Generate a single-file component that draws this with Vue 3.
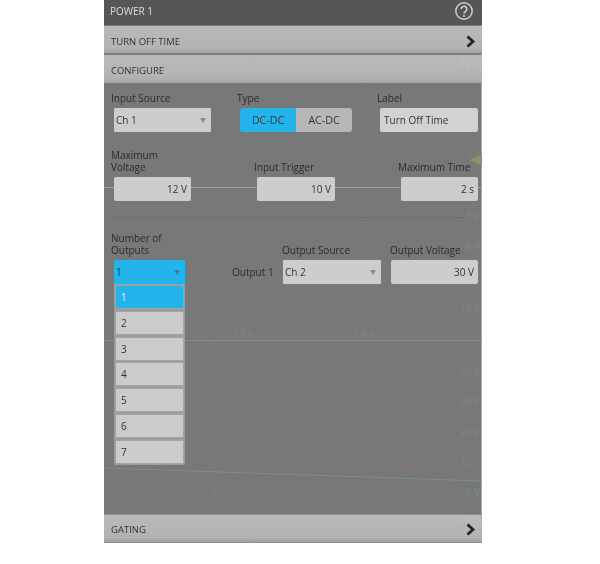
<script setup>
const menu = ['1', '2', '3', '4', '5', '6', '7']
const voltLabels = [
  ['12 V', 67, '#c2c2be'], ['9 V', 97, '#80807a'], ['3 V', 158, '#80807a'], ['-3 V', 219, '#878782'],
  ['-6 V', 250, '#868680'], ['-9 V', 280, '#82827c'], ['-12 V', 311, '#88887c'],
  ['40 V', 375, '#808884'], ['30 V', 405, '#7f8783'], ['20 V', 436, '#7f8783'], ['10 V', 466, '#7f8783'],
  ['0 V', 496, '#7f8783'], ['-10 V', 525, '#bcc0bc']
]
</script>

<template>
  <div class="page">
    <section class="panel">
      <svg class="scope" width="378" height="543" viewBox="104 0 378 543" aria-hidden="true">
        <line x1="104" y1="340.5" x2="482" y2="340.5" stroke="#8a8a8a" />
        <line x1="104" y1="187.5" x2="482" y2="187.5" stroke="#a9a670" />
        <line x1="112" y1="217.5" x2="470" y2="217.5" stroke="#736c6c" />
        <line x1="104" y1="468" x2="482" y2="481" stroke="#7c8e8e" />
        <line x1="104" y1="493.5" x2="470" y2="493.5" stroke="#808080" stroke-dasharray="5 4" />
        <line x1="213.5" y1="340" x2="213.5" y2="515" stroke="#85807a" stroke-dasharray="4 3" />
        <line x1="363.5" y1="84" x2="363.5" y2="515" stroke="#808080" stroke-dasharray="1 5" />
        <path d="M482 154 L469 160 L482 166 Z" fill="#8f8e6e" />
        <text x="233" y="336" class="tick">1.2 s</text>
        <text x="354" y="336" class="tick">1.4 s</text>
        <text v-for="l in voltLabels" :key="l[0]" x="480" :y="l[1]" class="volt" :fill="l[2]">{{ l[0] }}</text>
      </svg>

      <header class="title">
        <span>POWER 1</span>
        <svg class="help" width="20" height="20" viewBox="0 0 20 20">
          <circle cx="10" cy="10" r="8.2" fill="none" stroke="#d4d4d4" stroke-width="1.4" />
          <path d="M7.2 8a2.8 2.8 0 1 1 4.4 2.3c-1 .7-1.6 1.2-1.6 2.5" fill="none" stroke="#d4d4d4" stroke-width="1.5" />
          <circle cx="10" cy="15" r="1" fill="#d4d4d4" />
        </svg>
      </header>

      <div class="band first">
        <span>TURN OFF TIME</span>
        <svg class="chev" width="11" height="13" viewBox="0 0 11 13"><path d="M2.5 1.5 L8 6.5 L2.5 11.5" fill="none" stroke="#222" stroke-width="2.8" /></svg>
      </div>
      <div class="band second"><span>CONFIGURE</span></div>

      <div class="body">
        <div class="row row-a">
          <div class="field w97">
            <label>Input Source</label>
            <div class="ctl select"><span>Ch 1</span><i class="caret"></i></div>
          </div>
          <div class="field type">
            <label>Type</label>
            <div class="toggle">
              <div class="opt on">DC-DC</div>
              <div class="opt">AC-DC</div>
            </div>
          </div>
          <div class="field w98">
            <label>Label</label>
            <div class="ctl text">Turn Off Time</div>
          </div>
        </div>

        <div class="row row-b">
          <div class="field w77">
            <label>Maximum<br />Voltage</label>
            <div class="ctl num">12 V</div>
          </div>
          <div class="field w78">
            <label>Input Trigger</label>
            <div class="ctl num">10 V</div>
          </div>
          <div class="field w77">
            <label>Maximum Time</label>
            <div class="ctl num">2 s</div>
          </div>
        </div>

        <div class="rule"></div>

        <div class="row row-c">
          <div class="field w71">
            <label>Number of<br />Outputs</label>
            <div class="ctl select active"><span>1</span><i class="caret"></i></div>
          </div>
          <div class="out-name">Output 1</div>
          <div class="field w98">
            <label class="near">Output Source</label>
            <div class="ctl select"><span>Ch 2</span><i class="caret"></i></div>
          </div>
          <div class="field w87">
            <label class="near">Output Voltage</label>
            <div class="ctl num">30 V</div>
          </div>
        </div>

        <ul class="menu">
          <li v-for="(m, i) in menu" :key="m" :class="{ sel: i === 0 }">{{ m }}</li>
        </ul>
      </div>

      <div class="band last">
        <span>GATING</span>
        <svg class="chev" width="11" height="13" viewBox="0 0 11 13"><path d="M2.5 1.5 L8 6.5 L2.5 11.5" fill="none" stroke="#222" stroke-width="2.8" /></svg>
      </div>
    </section>
  </div>
</template>

<style scoped>
.page {
  width: 600px;
  height: 564px;
  background: #fff;
  padding-left: 104px;
  box-sizing: border-box;
  font-family: "Open Sans", "Liberation Sans", sans-serif;
  font-size: 10px;
  color: #2b2b2b;
}
.panel {
  position: relative;
  width: 378px;
  height: 543px;
  background: #787878;
  display: flex;
  flex-direction: column;
  filter: blur(0.35px);
  overflow: hidden;
  box-shadow: inset -1px 0 0 #a8a8a8;
}
.scope {
  position: absolute;
  left: 0;
  top: 0;
  z-index: 1;
}
.tick {
  font-size: 9px;
  fill: #888888;
}
.volt {
  font-size: 10px;
  text-anchor: end;
}
.title {
  height: 25px;
  background: #565656;
  color: #dcdcdc;
  display: flex;
  align-items: center;
  justify-content: space-between;
  padding: 0 8px 3px 6px;
  box-sizing: border-box;
  flex: none;
  position: relative;
  z-index: 2;
  font-size: 10px;
}
.band {
  flex: none;
  display: flex;
  align-items: center;
  justify-content: space-between;
  padding: 0 6px 0 7px;
  background: linear-gradient(#b9b9b9, #b3b3b3 80%, #a4a4a4);
  color: #333;
  position: relative;
  font-size: 9.5px;
}
.band span, .band svg {
  position: relative;
  z-index: 2;
}
.first {
  height: 28px;
  margin-top: 1px;
  padding-top: 3px;
  border-bottom: 1px solid #808080;
  box-sizing: border-box;
}
.second {
  height: 28px;
  margin-top: 1px;
  padding-top: 3px;
  box-sizing: border-box;
}
.last {
  height: 29px;
  padding-top: 1px;
  border-top: 1px solid #8c8c8c;
  box-sizing: border-box;
  border-bottom: 1px solid #8e8e8e;
}
.body {
  flex: 1;
  position: relative;
  z-index: 2;
  padding: 9px 4px 0 10px;
  display: flex;
  flex-direction: column;
  min-height: 0;
}
.row {
  display: flex;
  align-items: flex-end;
}
.row-a {
  height: 40px;
  gap: 29px;
}
.row-a .type {
  width: 112px;
}
.row-a .w98 {
  margin-left: -1px;
}
.row-b {
  margin-top: 28px;
  height: 41px;
  justify-content: space-between;
}
.rule {
  height: 33px;
}
.row-c {
  height: 50px;
}
.row-c .out-name {
  width: 41px;
  margin-left: 47px;
  margin-right: 10px;
  height: 24px;
  line-height: 24px;
  white-space: nowrap;
}
.row-c .w87 {
  margin-left: 10px;
}
.field {
  display: flex;
  flex-direction: column;
  flex: none;
}
.field label {
  line-height: 12px;
  margin: 0 0 4px -3px;
  white-space: nowrap;
}
.field label.near {
  margin-left: -1px;
}
.w71 { width: 71px; }
.w77 { width: 77px; }
.w78 { width: 78px; }
.w87 { width: 87px; }
.w97 { width: 97px; }
.w98 { width: 98px; }
.ctl {
  height: 24px;
  box-sizing: border-box;
  background: #cdcdcd;
  border-radius: 2px;
  display: flex;
  align-items: center;
  padding: 0 4px;
  color: #333;
  flex: none;
}
.select {
  justify-content: space-between;
  padding: 0 5px 0 2px;
  border-radius: 1px;
}
.text {
  background: #d2d2d2;
}
.num {
  justify-content: flex-end;
}
.caret {
  width: 0;
  height: 0;
  border-left: 3.5px solid transparent;
  border-right: 3.5px solid transparent;
  border-top: 5px solid #8d8d8d;
}
.active {
  background: #22b4ea;
}
.active .caret {
  border-top-color: #3d7d9c;
}
.toggle {
  display: flex;
  height: 24px;
  border-radius: 3px;
  overflow: hidden;
  font-size: 10.6px;
}
.opt {
  flex: 1;
  display: flex;
  align-items: center;
  justify-content: center;
  background: #b7b7b7;
  color: #333;
}
.on {
  background: #22b4ea;
}
.menu {
  list-style: none;
  margin: 0;
  padding: 1px;
  width: 71px;
  box-sizing: border-box;
  background: #9d9d9d;
  display: flex;
  flex-direction: column;
  gap: 1.8px;
  border-radius: 1px;
}
.menu li {
  height: 24px;
  line-height: 23px;
  background: #cbcbcb;
  padding-left: 5px;
  border: 1px solid #a3a3a3;
  box-sizing: border-box;
  color: #333;
}
.menu li.sel {
  background: #22b4ea;
  color: #d8f2ff;
}
</style>
